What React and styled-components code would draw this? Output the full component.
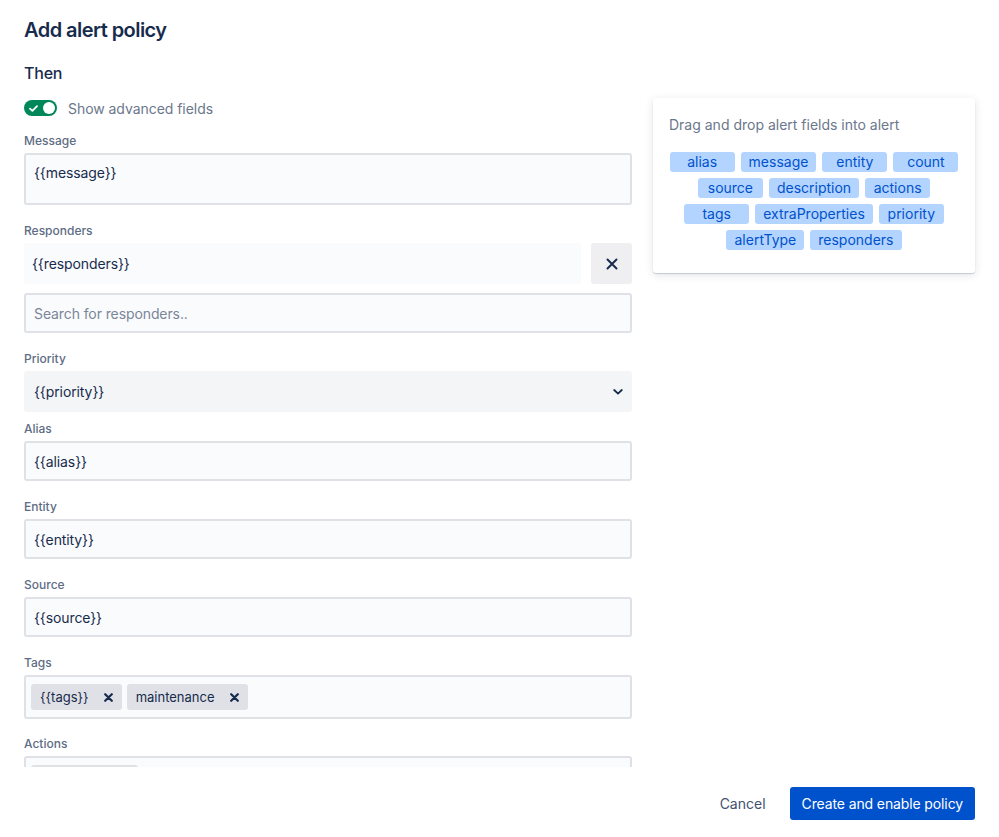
import React from "react";
import styled, { createGlobalStyle } from "styled-components";

const Global = createGlobalStyle`
  html, body { margin: 0; padding: 0; background: #fff; }
  body { font-family: Inter, "Noto Sans", sans-serif; color: #172B4D; -webkit-font-smoothing: antialiased; }
  * { box-sizing: border-box; }
`;

const Page = styled.div`
  height: 837px;
  display: flex;
  flex-direction: column;
  overflow: hidden;
`;

const Header = styled.div`
  padding: 18px 24px 0;
`;

const Title = styled.h1`
  margin: 0;
  font-size: 20px;
  line-height: 24px;
  font-weight: 600;
  letter-spacing: -0.55px;
  color: #172B4D;
`;

const Body = styled.div`
  flex: 1;
  min-height: 0;
  display: flex;
  gap: 21px;
  padding: 0 24px;
  margin-top: 21px;
`;

const FormColumn = styled.div`
  width: 608px;
  flex: none;
  overflow: hidden;
`;

const SubTitle = styled.h2`
  margin: 0 0 17px;
  font-size: 16px;
  line-height: 20px;
  font-weight: 500;
  letter-spacing: -0.2px;
  color: #172B4D;
`;

const ToggleRow = styled.label`
  display: flex;
  align-items: center;
  gap: 11px;
  height: 16px;
  margin-bottom: 17px;
  font-size: 14px;
  color: #6B778C;
  letter-spacing: -0.05px;
`;

const Switch = styled.span`
  position: relative;
  width: 33px;
  height: 16px;
  border-radius: 8px;
  background: #00875A;
  display: inline-flex;
  align-items: center;
  flex: none;
`;

const Knob = styled.span`
  position: absolute;
  right: 2px;
  top: 2px;
  width: 12px;
  height: 12px;
  border-radius: 50%;
  background: #fff;
`;

const Field = styled.div`
  margin-bottom: ${(p) => p.$mb ?? 18}px;
`;

const Label = styled.div`
  font-size: 12px;
  line-height: 16px;
  font-weight: 500;
  color: #5E6C84;
  margin-bottom: 4px;
`;

const Box = styled.div`
  height: ${(p) => p.$h || 40}px;
  border: 2px solid #DFE1E6;
  border-radius: 3px;
  background: #FAFBFC;
  display: flex;
  align-items: ${(p) => (p.$top ? "flex-start" : "center")};
  padding: ${(p) => (p.$top ? "9px 8px" : "0 8px")};
  font-size: 14px;
  letter-spacing: -0.1px;
  color: #172B4D;
`;

const Placeholder = styled.span`
  color: #7A869A;
`;

const ResponderRow = styled.div`
  display: flex;
  gap: 10px;
  margin-bottom: 9px;
`;

const ResponderValue = styled.div`
  flex: 1;
  height: 41px;
  background: #FAFBFC;
  border-radius: 3px;
  display: flex;
  align-items: center;
  padding: 0 8px;
  font-size: 14px;
  letter-spacing: -0.1px;
  color: #172B4D;
`;

const IconButton = styled.button`
  width: 41px;
  height: 41px;
  border: none;
  border-radius: 3px;
  background: #EFEFF1;
  display: flex;
  align-items: center;
  justify-content: center;
  padding: 0;
  color: #172B4D;
`;

const Select = styled.div`
  height: 41px;
  border-radius: 3px;
  background: #F4F5F7;
  display: flex;
  align-items: center;
  justify-content: space-between;
  padding: 0 9px 0 10px;
  font-size: 14px;
  letter-spacing: -0.1px;
  color: #172B4D;
`;

const TagBox = styled.div`
  min-height: 43px;
  border: 2px solid #DFE1E6;
  border-radius: 3px;
  background: #FAFBFC;
  display: flex;
  align-items: flex-start;
  gap: 5px;
  padding: 7px 5px;
`;

const TagChip = styled.span`
  display: inline-flex;
  align-items: center;
  height: 26px;
  padding: 0 9px 0 9px;
  gap: 15px;
  border-radius: 3px;
  background: #DFE1E6;
  font-size: 13px;
  color: #172B4D;
  min-width: ${(p) => p.$minw || 0}px;
`;

const SideCard = styled.div`
  flex: 1;
  align-self: flex-start;
  margin-top: 35px;
  background: #fff;
  border-radius: 3px;
  box-shadow: 0 1px 1px rgba(9, 30, 66, 0.18), 0 2px 8px rgba(9, 30, 66, 0.12);
  padding: 17px 16px 23px;
`;

const Hint = styled.div`
  font-size: 14px;
  line-height: 20px;
  color: #6B778C;
  margin-bottom: 17px;
`;

const ChipWrap = styled.div`
  display: flex;
  flex-wrap: wrap;
  justify-content: center;
  gap: 6px 6px;
`;

const FieldChip = styled.span`
  min-width: 65px;
  height: 20px;
  line-height: 20px;
  padding: 0 8px;
  text-align: center;
  border-radius: 3px;
  background: #B3D4FF;
  color: #0052CC;
  font-size: 14px;
`;

const Footer = styled.div`
  display: flex;
  justify-content: flex-end;
  align-items: center;
  gap: 24px;
  padding: 20px 24px 17px;
`;

const LinkButton = styled.button`
  border: none;
  background: none;
  font: inherit;
  font-size: 14px;
  color: #42526E;
  padding: 0;
`;

const PrimaryButton = styled.button`
  height: 33px;
  border: none;
  border-radius: 3px;
  background: #0052CC;
  color: #fff;
  font: inherit;
  font-size: 14px;
  letter-spacing: -0.12px;
  padding: 0 12px;
`;

const XIcon = ({ size = 12, sw = 2 }) => (
  <svg width={size} height={size} viewBox="0 0 12 12" fill="none">
    <path d="M1.5 1.5 L10.5 10.5 M10.5 1.5 L1.5 10.5" stroke="currentColor" strokeWidth={sw} strokeLinecap="round" />
  </svg>
);

const SmallX = () => (
  <svg width="9" height="9" viewBox="0 0 9 9" fill="none">
    <path d="M1.2 1.2 L7.8 7.8 M7.8 1.2 L1.2 7.8" stroke="#172B4D" strokeWidth="2.2" strokeLinecap="round" />
  </svg>
);

const Chevron = () => (
  <svg width="10" height="6" viewBox="0 0 10 6" fill="none">
    <path d="M1.2 1 L5 4.6 L8.8 1" stroke="#172B4D" strokeWidth="1.8" strokeLinecap="round" strokeLinejoin="round" />
  </svg>
);

const Check = () => (
  <svg width="9" height="7" viewBox="0 0 9 7" fill="none" style={{ marginLeft: 5 }}>
    <path d="M1 3.6 L3.4 5.8 L8 1.2" stroke="#fff" strokeWidth="1.8" strokeLinecap="round" strokeLinejoin="round" />
  </svg>
);

const fields = [
  "alias", "message", "entity", "count", "source", "description", "actions",
  "tags", "extraProperties", "priority", "alertType", "responders",
];

export default function App() {
  return (
    <Page>
      <Global />
      <Header>
        <Title>Add alert policy</Title>
      </Header>
      <Body>
        <FormColumn>
          <SubTitle>Then</SubTitle>
          <ToggleRow>
            <Switch>
              <Check />
              <Knob />
            </Switch>
            Show advanced fields
          </ToggleRow>

          <Field>
            <Label>Message</Label>
            <Box $h={52} $top>{"{{message}}"}</Box>
          </Field>

          <Field>
            <Label>Responders</Label>
            <ResponderRow>
              <ResponderValue>{"{{responders}}"}</ResponderValue>
              <IconButton aria-label="Remove">
                <XIcon />
              </IconButton>
            </ResponderRow>
            <Box>
              <Placeholder>Search for responders..</Placeholder>
            </Box>
          </Field>

          <Field $mb={9}>
            <Label>Priority</Label>
            <Select>
              <span>{"{{priority}}"}</span>
              <Chevron />
            </Select>
          </Field>

          <Field>
            <Label>Alias</Label>
            <Box>{"{{alias}}"}</Box>
          </Field>

          <Field>
            <Label>Entity</Label>
            <Box>{"{{entity}}"}</Box>
          </Field>

          <Field>
            <Label>Source</Label>
            <Box>{"{{source}}"}</Box>
          </Field>

          <Field $mb={17}>
            <Label>Tags</Label>
            <TagBox>
              <TagChip>
                {"{{tags}}"}
                <SmallX />
              </TagChip>
              <TagChip>
                maintenance
                <SmallX />
              </TagChip>
            </TagBox>
          </Field>

          <Field>
            <Label>Actions</Label>
            <TagBox>
              <TagChip $minw={107} />
            </TagBox>
          </Field>
        </FormColumn>

        <SideCard>
          <Hint>Drag and drop alert fields into alert</Hint>
          <ChipWrap>
            {fields.map((f) => (
              <FieldChip key={f}>{f}</FieldChip>
            ))}
          </ChipWrap>
        </SideCard>
      </Body>
      <Footer>
        <LinkButton>Cancel</LinkButton>
        <PrimaryButton>Create and enable policy</PrimaryButton>
      </Footer>
    </Page>
  );
}
